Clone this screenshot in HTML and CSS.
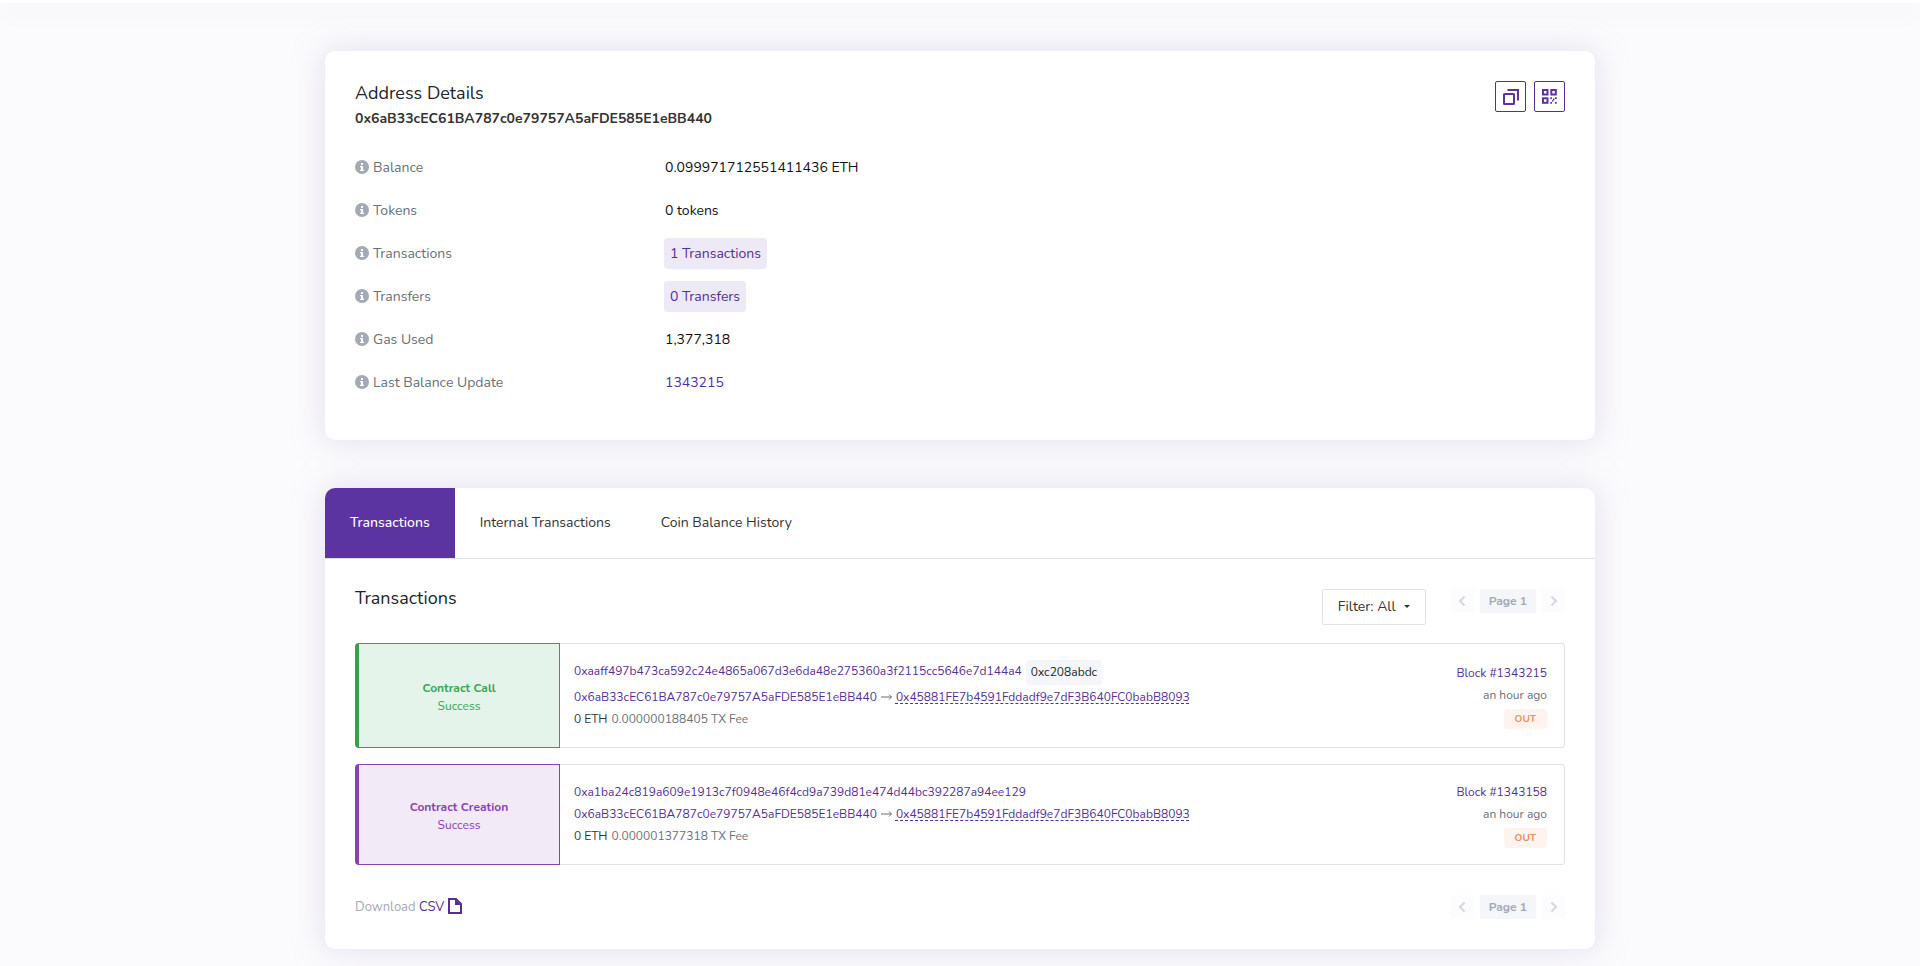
FILE: index.html
```html
<!DOCTYPE html>
<html lang="en">
<head>
<meta charset="utf-8">
<title>Address Details</title>
<link rel="stylesheet" href="styles.css">
</head>
<body>
<svg class="sprite" aria-hidden="true">
  <symbol id="info" viewBox="0 0 14 14"><circle cx="7" cy="7" r="7" fill="#a3a9b5"/><path d="M6 3h2v2H6zM5 6h3v3.700h1V11H5V9.700h1V7.200H5z" fill="#fff"/></symbol>
  <symbol id="left" viewBox="0 0 8 12"><path d="M6.500 1.500L2 6l4.500 4.500" fill="none" stroke="currentColor" stroke-width="2"/></symbol>
  <symbol id="right" viewBox="0 0 8 12"><path d="M1.500 1.500L6 6l-4.500 4.500" fill="none" stroke="currentColor" stroke-width="2"/></symbol>
</svg>
<header class="topbar"></header>
<main class="container">
  <section class="card details">
    <div class="details-head">
      <div>
        <h1 class="title">Address Details</h1>
        <h2 class="address">0x6aB33cEC61BA787c0e79757A5aFDE585E1eBB440</h2>
      </div>
      <div class="actions">
        <button class="icon-btn" type="button" aria-label="Copy address">
          <svg width="17" height="17" viewBox="0 0 17 17" fill="none" stroke="currentColor" stroke-width="2"><rect x="2" y="6" width="10" height="10" rx=".5"/><path d="M5.500 2H16v10.500"/></svg>
        </button>
        <button class="icon-btn" type="button" aria-label="QR code">
          <svg width="15" height="15" viewBox="0 0 15 15"><g fill="none" stroke="currentColor" stroke-width="2"><rect x="1" y="1" width="4.500" height="4.500"/><rect x="9.300" y="1" width="4.500" height="4.500"/><rect x="1" y="9.300" width="4.500" height="4.500"/></g><path d="M8.300 8.300h1.700V10H8.300zM13 8.300h1.700V10H13zM11 9.500h1.500V11H11zM10 11h1.500v1.500H10zM8.300 13H10v1.700H8.300zM13 13h1.700v1.700H13z" fill="currentColor"/></svg>
        </button>
      </div>
    </div>
    <dl class="facts">
      <dt><svg class="info"><use href="#info"/></svg>Balance</dt><dd>0.099971712551411436 ETH</dd>
      <dt><svg class="info"><use href="#info"/></svg>Tokens</dt><dd>0 tokens</dd>
      <dt><svg class="info"><use href="#info"/></svg>Transactions</dt><dd><a class="count" href="#">1 Transactions</a></dd>
      <dt><svg class="info"><use href="#info"/></svg>Transfers</dt><dd><a class="count" href="#">0 Transfers</a></dd>
      <dt><svg class="info"><use href="#info"/></svg>Gas Used</dt><dd>1,377,318</dd>
      <dt><svg class="info"><use href="#info"/></svg>Last Balance Update</dt><dd><a href="#">1343215</a></dd>
    </dl>
  </section>

  <section class="card">
    <nav class="tabs">
      <a class="tab active" href="#">Transactions</a>
      <a class="tab" href="#">Internal Transactions</a>
      <a class="tab" href="#">Coin Balance History</a>
    </nav>
    <div class="card-body">
      <div class="list-head">
        <h2 class="title">Transactions</h2>
        <div class="controls">
          <div class="filter"><select class="filter-select" aria-label="Filter"><option>Filter: All</option></select></div>
          <div class="pager">
            <button class="page-btn" type="button" aria-label="Previous page" disabled><svg width="8" height="12"><use href="#left"/></svg></button>
            <span class="page-now">Page 1</span>
            <button class="page-btn" type="button" aria-label="Next page" disabled><svg width="8" height="12"><use href="#right"/></svg></button>
          </div>
        </div>
      </div>

      <article class="tile call">
        <div class="status"><strong>Contract Call</strong><span>Success</span></div>
        <div class="tx">
          <div class="line"><a href="#">0xaaff497b473ca592c24e4865a067d3e6da48e275360a3f2115cc5646e7d144a4</a><span class="method">0xc208abdc</span></div>
          <div class="line"><a href="#">0x6aB33cEC61BA787c0e79757A5aFDE585E1eBB440</a><svg class="arrow" viewBox="0 0 11 8"><path d="M0 4h10.500M8 1.500L10.500 4 8 6.500" fill="none" stroke="currentColor"/></svg><a class="contract" href="#">0x45881FE7b4591Fddadf9e7dF3B640FC0babB8093</a></div>
          <div class="line"><span class="value">0 ETH</span><span>0.000000188405 TX Fee</span></div>
        </div>
        <div class="meta"><a href="#">Block #1343215</a><span>an hour ago</span><span class="out">OUT</span></div>
      </article>

      <article class="tile creation">
        <div class="status"><strong>Contract Creation</strong><span>Success</span></div>
        <div class="tx">
          <div class="line"><a href="#">0xa1ba24c819a609e1913c7f0948e46f4cd9a739d81e474d44bc392287a94ee129</a></div>
          <div class="line"><a href="#">0x6aB33cEC61BA787c0e79757A5aFDE585E1eBB440</a><svg class="arrow" viewBox="0 0 11 8"><path d="M0 4h10.500M8 1.500L10.500 4 8 6.500" fill="none" stroke="currentColor"/></svg><a class="contract" href="#">0x45881FE7b4591Fddadf9e7dF3B640FC0babB8093</a></div>
          <div class="line"><span class="value">0 ETH</span><span>0.000001377318 TX Fee</span></div>
        </div>
        <div class="meta"><a href="#">Block #1343158</a><span>an hour ago</span><span class="out">OUT</span></div>
      </article>

      <div class="list-foot">
        <p class="download">Download <a href="#">CSV <svg width="14" height="16" viewBox="0 0 14 16"><path d="M1 1h7l5 5v9H1z" fill="none" stroke="currentColor" stroke-width="2"/><path d="M7 1l6 6H7z" fill="currentColor"/></svg></a></p>
        <div class="pager">
          <button class="page-btn" type="button" aria-label="Previous page" disabled><svg width="8" height="12"><use href="#left"/></svg></button>
          <span class="page-now">Page 1</span>
          <button class="page-btn" type="button" aria-label="Next page" disabled><svg width="8" height="12"><use href="#right"/></svg></button>
        </div>
      </div>
    </div>
  </section>
</main>
</body>
</html>
```
FILE: styles.css
```css
* { box-sizing: border-box; }
body { margin: 0; background: #fbfafc; color: #212529; font: 14px/20px Nunito, Lato, "Open Sans", sans-serif; }
h1, h2, p, dl, dd { margin: 0; }
a { color: #552f98; text-decoration: none; }
button, select { font: inherit; }
.sprite { display: none; }
.topbar { height: 3px; background: #fff; box-shadow: 0 4px 30px rgba(0, 0, 0, .14); }
.container { max-width: 1300px; margin: 0 auto; padding: 48px 15px; display: flex; flex-direction: column; gap: 48px; }
.card { background: #fff; border-radius: 10px; box-shadow: 0 0 30px rgba(202, 199, 226, .5); }
.title { font-size: 18px; line-height: 24px; font-weight: 400; }

.details { padding: 30px 30px 36px; }
.details-head { display: flex; justify-content: space-between; }
.address { padding-top: 2px; font-size: 14px; line-height: 24px; font-weight: 700; color: #333; }
.actions { display: flex; gap: 8px; }
.icon-btn { width: 31px; height: 31px; padding: 0; display: grid; place-items: center; background: #fff; border: 1px solid #552f98; border-radius: 2px; color: #5c34a2; }
.facts { display: grid; grid-template-columns: 1fr 3fr; grid-auto-rows: 43px; align-items: center; margin: 15px -30px 0 0; }
.facts dt { display: flex; align-items: center; gap: 4px; color: #687078; }
.facts dd { color: #111; }
.info { width: 14px; height: 14px; margin-bottom: 2px; }
.count { display: inline-block; padding: 6px 6px 5px; margin-left: -1px; border-radius: 4px; background: #eee9f6; }

.tabs { display: flex; border-bottom: 1px solid #dee2e6; }
.tab { padding: 25px; color: #333; }
.tab.active { background: #5c34a2; color: #fff; font-weight: 500; border-top-left-radius: 10px; }
.card-body { padding: 30px; }
.list-head { display: flex; justify-content: space-between; align-items: flex-start; margin-bottom: 18px; }
.list-head .title { line-height: 18px; }
.controls { display: flex; gap: 25px; align-items: flex-start; }
.filter { position: relative; }
.filter::after { content: ""; position: absolute; right: 16px; top: 16px; border: 3px solid transparent; border-top-color: #333; pointer-events: none; }
.filter-select { appearance: none; height: 36px; padding: 0 29px 0 15px; border: 1px solid #dee2e6; border-radius: 2px; background: #fff; color: #333; }
.pager { display: flex; gap: 6px; }
.page-btn { width: 23px; height: 24px; padding: 0; border: 0; display: grid; place-items: center; background: #fcfcfe; color: #d5d8de; }
.page-now { padding: 0 9px; background: #f5f6fa; color: #a3a9b5; font-size: 12px; line-height: 24px; font-weight: 700; }

.tile { display: flex; margin-bottom: 16px; border: 1px solid #dee2e6; border-left: 0; border-radius: 4px; font-size: 12px; line-height: 22px; color: #687078; }
.status { width: 205px; margin: -1px 0; padding-top: 2px; display: flex; flex-direction: column; align-items: center; justify-content: center; line-height: 18px; border: 1px solid; border-left-width: 4px; border-radius: 4px 0 0 4px; }
.call .status { color: #34a853; background: #e4f4ea; border-color: #34a14f; }
.creation .status { color: #8b40b8; background: #f3eaf8; border-color: #8743b3; }
.tx { flex: 1; padding: 16px 14px 17px; }
.line { display: flex; gap: 4px; }
.value { color: #333; }
.method { padding: 0 5px; margin-bottom: 1px; line-height: 25px; background: #f5f6fa; border-radius: 4px; color: #212529; }
.arrow { width: 11px; height: 8px; margin-top: 7px; }
.contract { text-decoration: underline dashed 1px; text-underline-offset: 2px; }
.meta { display: flex; flex-direction: column; align-items: flex-end; justify-content: center; padding-right: 17px; }
.out { padding: 0 11px; margin-top: 3px; border-radius: 4px; background: #fef3ee; color: #e8915f; font-size: 10px; line-height: 20px; font-weight: 700; }
.list-foot { display: flex; justify-content: space-between; align-items: center; margin-top: 30px; }
.download { font-size: 13px; color: #a3a9b5; }
.download svg { vertical-align: -3px; }
```
